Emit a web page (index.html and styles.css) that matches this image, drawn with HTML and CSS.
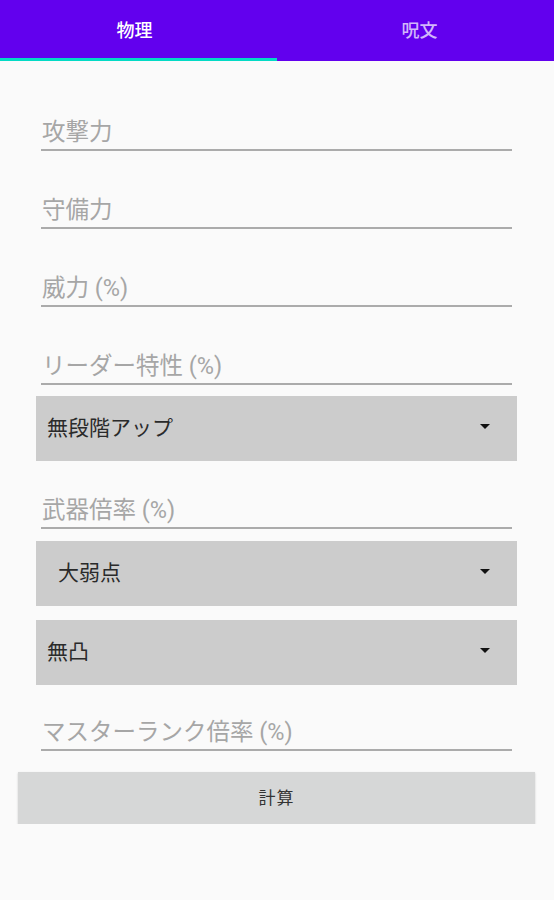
FILE: index.html
```html
<!DOCTYPE html>
<html lang="ja">
<head>
<meta charset="utf-8">
<title>計算</title>
<link rel="stylesheet" href="styles.css">
</head>
<body>
<header class="tabs">
  <div class="tab tab-active">物理</div>
  <div class="tab tab-second">呪文</div>
</header>
<main class="form">
  <div class="field field-first"><span class="label">攻撃力</span></div>
  <div class="field"><span class="label">守備力</span></div>
  <div class="field"><span class="label">威力 (%)</span></div>
  <div class="field"><span class="label">リーダー特性 (%)</span></div>
  <div class="spinner spinner-a">
    <span class="spinner-text">無段階アップ</span>
    <svg class="arrow" width="10" height="5" viewBox="0 0 10 5"><path d="M0 0H10L5 5Z" fill="#111"/></svg>
  </div>
  <div class="field field-after-spinner"><span class="label">武器倍率 (%)</span></div>
  <div class="spinner spinner-b spinner-indent">
    <span class="spinner-text">大弱点</span>
    <svg class="arrow" width="10" height="5" viewBox="0 0 10 5"><path d="M0 0H10L5 5Z" fill="#111"/></svg>
  </div>
  <div class="spinner spinner-c">
    <span class="spinner-text">無凸</span>
    <svg class="arrow" width="10" height="5" viewBox="0 0 10 5"><path d="M0 0H10L5 5Z" fill="#111"/></svg>
  </div>
  <div class="field field-after-spinner2"><span class="label">マスターランク倍率 (%)</span></div>
  <div class="button-row"><div class="button">計算</div></div>
</main>
</body>
</html>
```

FILE: styles.css
```css
html, body {
  margin: 0;
  padding: 0;
  background: #fafafa;
  font-family: Roboto, "Noto Sans CJK JP", sans-serif;
}

.tabs {
  display: flex;
  height: 61px;
  background: #6200ee;
}

.tab {
  flex: 1;
  display: flex;
  align-items: center;
  justify-content: center;
  padding-bottom: 3px;
  font-size: 18px;
  font-weight: 500;
  color: rgba(255, 255, 255, 0.72);
  box-sizing: border-box;
}

.tab-active {
  color: #ffffff;
  border-bottom: 3px solid #03dac5;
  padding-bottom: 0;
  padding-right: 8px;
}

.tab-second {
  padding-left: 8px;
}

.form {
  display: flex;
  flex-direction: column;
}

.field {
  margin: 43px 42px 0 41px;
  padding-bottom: 1px;
  border-bottom: 2px solid #ababab;
}

.field-first {
  margin-top: 55px;
}

.field-after-spinner {
  margin-top: 33px;
}

.field-after-spinner2 {
  margin-top: 31px;
}

.label {
  display: block;
  padding-left: 1px;
  font-size: 23.5px;
  line-height: 32px;
  color: #a6a6a6;
}

.spinner {
  display: flex;
  align-items: center;
  justify-content: space-between;
  height: 65px;
  margin: 11px 37px 0 36px;
  padding: 0 27px 0 11px;
  background: #cccccc;
}

.spinner-b {
  margin-top: 12px;
}

.spinner-c {
  margin-top: 14px;
}

.spinner-indent {
  padding-left: 22px;
}

.spinner-text {
  font-size: 21px;
  line-height: 28px;
  padding-bottom: 1px;
  color: #2a2a2a;
}

.arrow {
  display: block;
  margin-bottom: 4px;
}

.button-row {
  margin: 21px 19px 0 18px;
}

.button {
  height: 52px;
  display: flex;
  align-items: center;
  justify-content: center;
  background: #d6d7d7;
  box-shadow: 0 1px 2px rgba(0, 0, 0, 0.18);
  font-size: 17px;
  line-height: 24px;
  box-sizing: border-box;
  color: #333;
  letter-spacing: 1px;
}
```
